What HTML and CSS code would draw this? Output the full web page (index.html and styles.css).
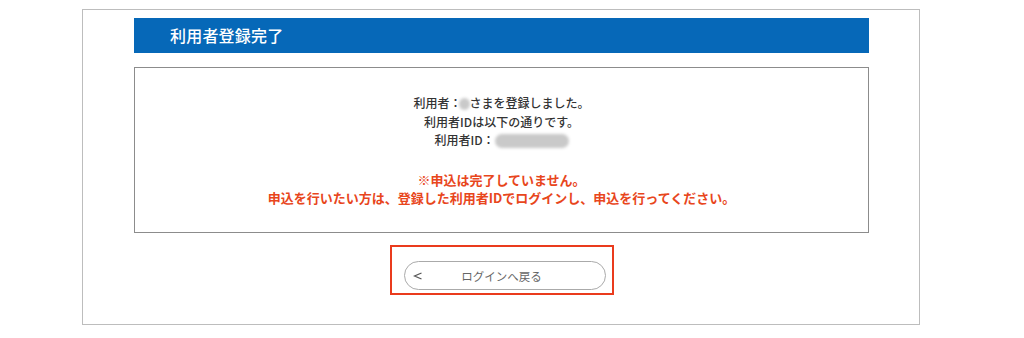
FILE: index.html
```html
<!DOCTYPE html>
<html lang="ja">
<head>
<meta charset="utf-8">
<link rel="stylesheet" href="styles.css">
</head>
<body>
<div class="frame">
  <div class="title-bar">利用者登録完了</div>
  <div class="message-box">
    <p class="line">利用者：<span class="blur blur-dot"></span>さまを登録しました。</p>
    <p class="line">利用者IDは以下の通りです。</p>
    <p class="line">利用者ID：<span class="blur blur-id"></span></p>
    <p class="warn warn-first">※申込は完了していません。</p>
    <p class="warn">申込を行いたい方は、登録した利用者IDでログインし、申込を行ってください。</p>
  </div>
  <div class="action">
    <div class="highlight">
      <button class="back-btn"><svg class="chev" width="10" height="10" viewBox="0 0 10 10"><path d="M8.5 2 L1.5 5 L8.5 8" fill="none" stroke="#555" stroke-width="1.2"/></svg><span class="label">ログインへ戻る</span></button>
    </div>
  </div>
</div>
</body>
</html>
```
FILE: styles.css
```css
html, body {
  margin: 0;
  padding: 0;
  background: #fff;
}
body {
  font-family: "Noto Sans CJK JP", "Noto Sans", sans-serif;
  color: #333;
}
.frame {
  margin: 9px 0 0 82px;
  width: 735px;
  height: 306px;
  border: 1px solid #bdbdbd;
  padding: 8px 50px 0 51px;
  box-sizing: content-box;
}
.title-bar {
  height: 35px;
  background: #0668b8;
  color: #fff;
  font-size: 16px;
  line-height: 35px;
  padding-left: 36px;
  font-weight: 500;
  letter-spacing: 0.2px;
}
.message-box {
  margin-top: 14px;
  border: 1px solid #8c8c8c;
  padding-top: 26px;
  box-sizing: content-box;
  height: 138px;
  text-align: center;
}
.line {
  margin: 0;
  font-size: 12px;
  line-height: 18.5px;
  font-weight: 500;
  color: #333;
}
.blur {
  display: inline-block;
  background: #c9c9c9;
  filter: blur(1.5px);
  vertical-align: middle;
}
.blur-dot {
  width: 11px;
  height: 12px;
  border-radius: 50%;
  margin: -2px 0 0 -3px;
}
.blur-id {
  width: 74px;
  height: 14px;
  border-radius: 7px;
  margin: -2px 0 0 0;
}
.warn {
  margin: 0;
  font-size: 13px;
  line-height: 18px;
  font-weight: 700;
  color: #e8461c;
}
.warn-first {
  margin-top: 21px;
}
.action {
  display: flex;
  justify-content: center;
  margin-top: 12px;
}
.highlight {
  border: 2px solid #ea3b1d;
  padding: 14px 6px 3px 12px;
}
.back-btn {
  display: flex;
  align-items: center;
  width: 202px;
  height: 29px;
  border: 1px solid #aaa;
  border-radius: 15px;
  background: #fff;
  padding: 0 0 0 8px;
  font-family: "Noto Sans CJK JP", "Noto Sans", sans-serif;
  color: #666;
}
.chev {
  display: block;
  flex: none;
}
.label {
  flex: 1;
  font-size: 11.5px;
  text-align: center;
  padding-right: 24px;
  color: #666;
}
```
